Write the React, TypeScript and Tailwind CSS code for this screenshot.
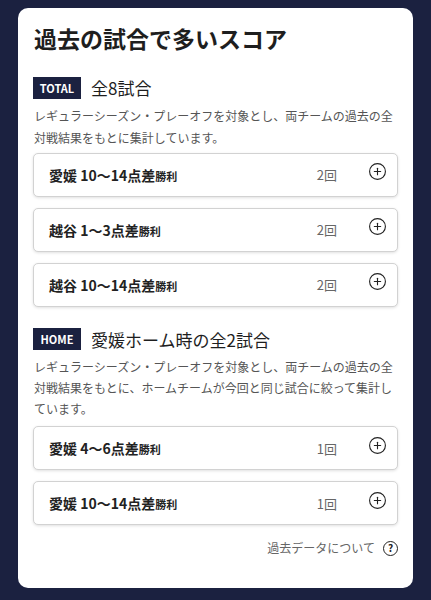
import { CirclePlus } from "lucide-react";

type Score = { team: string; diff: string; count: string };

const total: Score[] = [
  { team: "愛媛", diff: "10〜14点差", count: "2回" },
  { team: "越谷", diff: "1〜3点差", count: "2回" },
  { team: "越谷", diff: "10〜14点差", count: "2回" },
];

const home: Score[] = [
  { team: "愛媛", diff: "4〜6点差", count: "1回" },
  { team: "愛媛", diff: "10〜14点差", count: "1回" },
];

function Row({ s }: { s: Score }) {
  return (
    <div className="flex h-[44px] items-center rounded-[5px] border border-[#d2d2d2] bg-white pl-[15px] pr-[10px] shadow-[0_1px_3px_rgba(0,0,0,0.12)]">
      <div className="flex-1 text-[14px] font-bold text-[#222] leading-none">
        {s.team} {s.diff}
        <span className="text-[11px]">勝利</span>
      </div>
      <div className="text-[13px] text-[#666] leading-none">{s.count}</div>
      <CirclePlus size={19} strokeWidth={1.4} className="ml-[31px] -mt-[6px] text-[#222]" />
    </div>
  );
}

function Heading({ badge, title }: { badge: string; title: string }) {
  return (
    <div className="flex items-center">
      <span className="flex h-[22px] w-[48px] items-center justify-center bg-[#1b2140] text-[11px] font-bold text-white">
        {badge}
      </span>
      <span className="ml-[10px] text-[17px] text-[#1e1e1e]">{title}</span>
    </div>
  );
}

export default function App() {
  return (
    <div
      className="min-h-screen bg-[#1b2140] px-[18px] pt-[8px] pb-[13px]"
      style={{ fontFamily: '"Noto Sans CJK JP", "Noto Sans", sans-serif' }}
    >
      <div className="rounded-[10px] bg-white px-[15px] pt-[14px] pb-[31px]">
        <h2 className="pl-[1px] text-[23px] font-bold leading-[32px] text-[#1e1e1e]">過去の試合で多いスコア</h2>

        {/* TOTAL */}
        <div className="mt-[21px]">
          <Heading badge="TOTAL" title="全8試合" />
          <p className="mt-[4px] pl-[1px] text-[12px] leading-[22px] text-[#555]">
            レギュラーシーズン・プレーオフを対象とし、両チームの過去の全対戦結果をもとに集計しています。
          </p>
          <div className="mt-[4px] flex flex-col gap-[11px]">
            {total.map((s, i) => (
              <Row key={i} s={s} />
            ))}
          </div>
        </div>

        {/* HOME */}
        <div className="mt-[20px]">
          <Heading badge="HOME" title="愛媛ホーム時の全2試合" />
          <p className="mt-[4px] pl-[1px] text-[12px] leading-[21px] text-[#555]">
            レギュラーシーズン・プレーオフを対象とし、両チームの過去の全対戦結果をもとに、ホームチームが今回と同じ試合に絞って集計しています。
          </p>
          <div className="mt-[7px] flex flex-col gap-[11px]">
            {home.map((s, i) => (
              <Row key={i} s={s} />
            ))}
          </div>
        </div>

        <div className="mt-[14px] flex items-center justify-end text-[12px] leading-[18px] text-[#666]">
          過去データについて
          <span className="ml-[8px] flex h-[15px] w-[15px] items-center justify-center rounded-full border-[1.5px] border-[#222] text-[10px] font-bold leading-none text-[#222]">
            ?
          </span>
        </div>
      </div>
    </div>
  );
}
